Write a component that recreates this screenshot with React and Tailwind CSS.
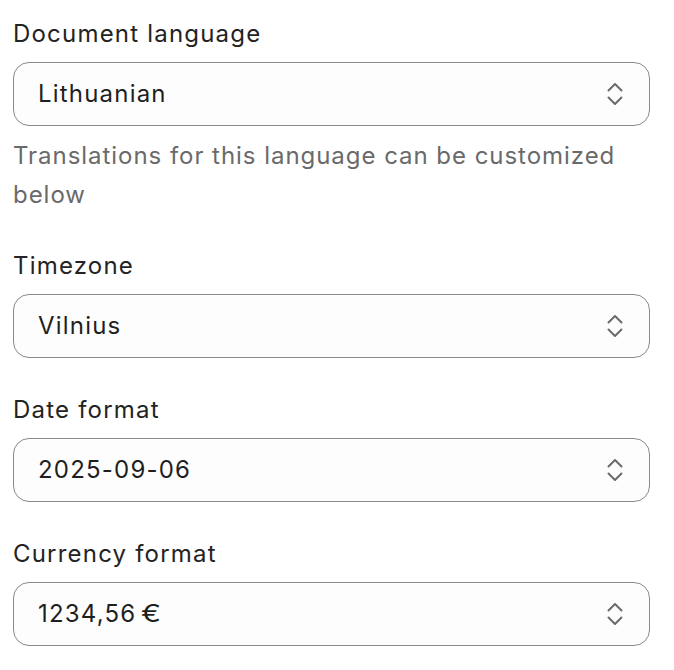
import React from 'react';

const Chevrons = () => (
    <svg width="16" height="24" viewBox="0 0 16 24" fill="none" stroke="#6b6b6b" strokeWidth="2" strokeLinecap="round" strokeLinejoin="round">
        <path d="M1.5 8.5 L8 2 L14.5 8.5" />
        <path d="M1.5 15.5 L8 22 L14.5 15.5" />
    </svg>
);

const SelectField = ({ label, value, help }) => (
    <div>
        <label className="block text-[24px] leading-[36px] tracking-[0.05em] text-[#232323] mb-[10px]">{label}</label>
        <div className="flex items-center justify-between h-[64px] pl-[24px] pr-[26px] rounded-[16px] border border-[#8a8a8a] bg-[#fdfdfd]">
            <span className="text-[24px] tracking-[0.05em] text-[#1f1f1f]">{value}</span>
            <Chevrons />
        </div>
        {help && (
            <p className="mt-[10px] text-[24px] leading-[39px] tracking-[0.04em] text-[#6a6a6a]">{help}</p>
        )}
    </div>
);

export default function App() {
    return (
        <div className="min-h-screen bg-white pl-[13px] pr-[24px] pt-[16px]" style={{ fontFamily: 'Inter, "Noto Sans", sans-serif' }}>
            <div className="flex flex-col gap-[34px] w-[637px]">
                <SelectField
                    label="Document language"
                    value="Lithuanian"
                    help="Translations for this language can be customized below"
                />
                <SelectField label="Timezone" value="Vilnius" />
                <SelectField label="Date format" value="2025-09-06" />
                <SelectField
                    label="Currency format"
                    value={<>1234,56<span className="ml-[5px] inline-block scale-x-125 origin-left">€</span></>}
                />
            </div>
        </div>
    );
}
